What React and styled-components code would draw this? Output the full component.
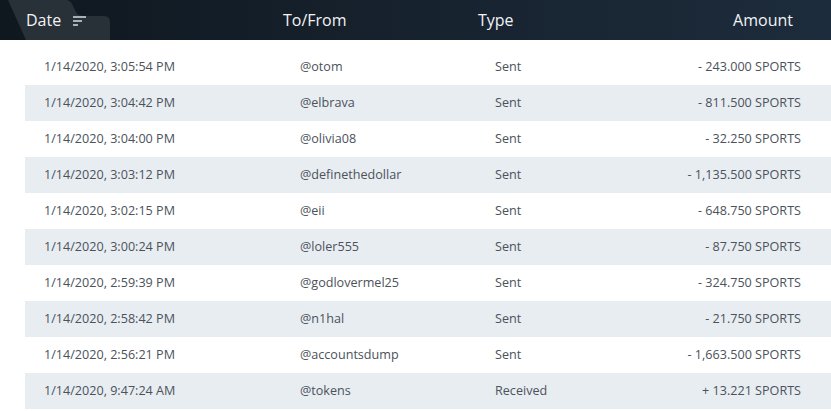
import React from 'react';
import styled, { createGlobalStyle } from 'styled-components';

const GlobalStyle = createGlobalStyle`
  html, body {
    margin: 0;
    padding: 0;
    background: #ffffff;
  }
  body {
    font-family: "Open Sans", "Liberation Sans", sans-serif;
  }
`;

const rows = [
  { date: '1/14/2020, 3:05:54 PM', who: '@otom', type: 'Sent', amount: '- 243.000 SPORTS' },
  { date: '1/14/2020, 3:04:42 PM', who: '@elbrava', type: 'Sent', amount: '- 811.500 SPORTS' },
  { date: '1/14/2020, 3:04:00 PM', who: '@olivia08', type: 'Sent', amount: '- 32.250 SPORTS' },
  { date: '1/14/2020, 3:03:12 PM', who: '@definethedollar', type: 'Sent', amount: '- 1,135.500 SPORTS' },
  { date: '1/14/2020, 3:02:15 PM', who: '@eii', type: 'Sent', amount: '- 648.750 SPORTS' },
  { date: '1/14/2020, 3:00:24 PM', who: '@loler555', type: 'Sent', amount: '- 87.750 SPORTS' },
  { date: '1/14/2020, 2:59:39 PM', who: '@godlovermel25', type: 'Sent', amount: '- 324.750 SPORTS' },
  { date: '1/14/2020, 2:58:42 PM', who: '@n1hal', type: 'Sent', amount: '- 21.750 SPORTS' },
  { date: '1/14/2020, 2:56:21 PM', who: '@accountsdump', type: 'Sent', amount: '- 1,663.500 SPORTS' },
  { date: '1/14/2020, 9:47:24 AM', who: '@tokens', type: 'Received', amount: '+ 13.221 SPORTS' },
];

const Page = styled.div`
  width: 831px;
  height: 411px;
  overflow: hidden;
  background: #fff;
`;

const Header = styled.div`
  position: relative;
  height: 40px;
  display: grid;
  grid-template-columns: 257px 195px 1fr auto;
  align-items: center;
  padding: 0 38px 0 26px;
  background: linear-gradient(90deg, #0f171f 0%, #15202b 40%, #1d2c3c 100%);
  overflow: hidden;
`;

// lighter tab shape behind the active "Date" column
const ActiveShape = styled.svg`
  position: absolute;
  left: 0;
  top: 0;
  width: 120px;
  height: 40px;
`;

const HeadCell = styled.div`
  position: relative;
  display: flex;
  align-items: center;
  gap: 12px;
  color: #f1f3f5;
  font-size: 16px;
  line-height: 20px;
  justify-content: ${(p) => (p.$right ? 'flex-end' : 'flex-start')};
`;

const SortIcon = styled.svg`
  width: 14px;
  height: 10px;
  margin-top: 2px;
`;

const Body = styled.div`
  margin: 9px 0 0 25px;
`;

const Row = styled.div`
  height: 36px;
  display: grid;
  grid-template-columns: 256px 195px 1fr auto;
  align-items: center;
  padding: 0 30px 0 19px;
  background: ${(p) => (p.$striped ? '#e8edf2' : '#ffffff')};
`;

const Cell = styled.div`
  color: #4b525a;
  font-size: 12.6px;
  line-height: 16px;
  white-space: nowrap;
  text-align: ${(p) => (p.$right ? 'right' : 'left')};
`;

export default function App() {
  return (
    <Page>
      <GlobalStyle />
      <Header>
        <ActiveShape viewBox="0 0 120 40">
          <path d="M8 0 H66 Q70 0 72 4 L76 12 Q78 16 84 16 H104 Q110 16 110 22 V40 H26 L8 0 Z" fill="#283038" />
        </ActiveShape>
        <HeadCell>
          Date
          <SortIcon viewBox="0 0 14 10">
            <rect x="0" y="0" width="13" height="2" fill="#a9b0b7" />
            <rect x="0" y="4" width="9" height="2" fill="#a9b0b7" />
            <rect x="0" y="8" width="5" height="2" fill="#a9b0b7" />
          </SortIcon>
        </HeadCell>
        <HeadCell>To/From</HeadCell>
        <HeadCell>Type</HeadCell>
        <HeadCell $right>Amount</HeadCell>
      </Header>
      <Body>
        {rows.map((r, i) => (
          <Row key={i} $striped={i % 2 === 1}>
            <Cell>{r.date}</Cell>
            <Cell>{r.who}</Cell>
            <Cell>{r.type}</Cell>
            <Cell $right>{r.amount}</Cell>
          </Row>
        ))}
      </Body>
    </Page>
  );
}
